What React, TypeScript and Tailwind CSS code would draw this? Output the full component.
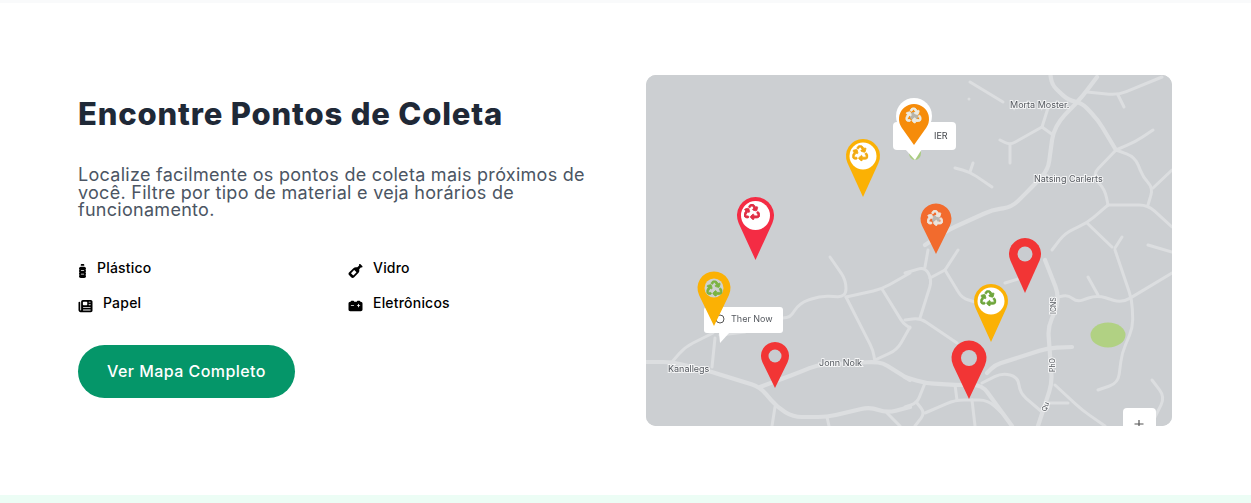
import { FaBottleWater, FaWineBottle, FaNewspaper, FaCarBattery, FaRecycle } from "react-icons/fa6"

const FONT = "font-['Inter','Noto_Sans',sans-serif]"

const MATERIALS = [
  { label: "Plástico", icon: <FaBottleWater className="w-[9px] h-[14px] mt-[6px]" /> },
  { label: "Vidro", icon: <FaWineBottle className="w-[15px] h-[14px] mt-[6px]" /> },
  { label: "Papel", icon: <FaNewspaper className="w-[15px] h-[14px] mt-[6px]" /> },
  { label: "Eletrônicos", icon: <FaCarBattery className="w-[15px] h-[14px] mt-[6px]" /> },
]

// main streets, a bit wider than the side streets
const MAIN_ROADS = [
  "1050,72 1052,85 1068,100 1082,103 1098,120 1116,150",
  "1097,77 1082,97 1060,120 1053,133 1048,170 1032,187 1012,207 992,210 948,230 925,245",
  "646,362 672,362 712,372 760,387 777,407 793,417 827,417 870,407 887,413 910,407",
  "760,387 800,372 817,365 873,362 883,363 910,380",
  "987,373 995,365 1048,348 1072,347",
  "905,377 925,383 955,385 982,385 1012,426",
  "1045,260 1058,293 1057,307 1048,327 1052,383 1038,426",
]

const SIDE_ROADS = [
  "970,82 1003,102",
  "1087,92 1118,95 1162,77",
  "1118,95 1124,107",
  "1116,150 1135,142 1153,130",
  "1116,150 1135,157 1143,177 1153,188 1148,205",
  "1116,150 1092,175 1105,190 1108,205",
  "1108,205 1148,205 1172,227",
  "1153,188 1172,170",
  "1108,205 1087,223 1065,233 1052,250",
  "1087,223 1112,247",
  "1115,248 1122,237",
  "1148,245 1172,252",
  "1042,127 1010,145 1000,140",
  "1010,145 1010,163",
  "1042,127 1053,135",
  "1042,127 1048,108",
  "955,168 970,172 992,187",
  "970,172 973,163",
  "1058,297 1068,295 1077,302 1097,295 1122,303 1172,273",
  "1088,277 1098,295",
  "1115,250 1132,300 1133,327 1122,353 1118,383 1098,390",
  "1152,380 1165,397 1155,417",
  "982,383 1002,373 1018,377 1020,393 1042,412",
  "925,383 917,403 905,407",
  "917,403 925,413 915,426",
  "955,385 957,400",
  "925,413 955,400 988,400 1005,416",
  "972,400 975,426",
  "1055,385 1082,410 1105,426",
  "1048,403 1068,403",
  "905,320 920,318 957,343",
  "920,318 932,280 925,267 905,273",
  "925,267 928,250",
  "945,270 930,278",
  "945,270 958,250",
  "945,270 962,298 975,302",
  "1005,283 1025,277",
  "672,362 685,347 713,333",
  "715,338 712,367",
  "775,407 772,426",
  "827,417 829,426",
  "887,413 900,426",
  "830,257 846,280 846,297 820,296 800,303 790,317 783,318",
  "846,297 882,289 910,273",
  "882,289 903,323 910,328",
  "846,297 873,350 875,362",
  "875,360 897,350 910,327",
  "720,335 745,332",
]

// polyline with its corners rounded off, the streets in the picture have no hard bends
function roadPath(points: string) {
  const pts = points.split(" ").map(p => p.split(",").map(Number))
  let d = `M${pts[0][0]} ${pts[0][1]}`
  for (let i = 1; i < pts.length - 1; i++) {
    const [px, py] = pts[i - 1]
    const [x, y] = pts[i]
    const [nx, ny] = pts[i + 1]
    const inLen = Math.hypot(x - px, y - py)
    const outLen = Math.hypot(nx - x, ny - y)
    const cut = Math.min(9, inLen / 2, outLen / 2)
    d += ` L${x - ((x - px) / inLen) * cut} ${y - ((y - py) / inLen) * cut}`
    d += ` Q${x} ${y} ${x + ((nx - x) / outLen) * cut} ${y + ((ny - y) / outLen) * cut}`
  }
  const last = pts[pts.length - 1]
  return `${d} L${last[0]} ${last[1]}`
}

function pinPath(cx: number, cy: number, r: number, tip: number) {
  const sin = r / (tip - cy)
  const cos = Math.sqrt(1 - sin * sin)
  const lx = cx - r * cos
  const rx = cx + r * cos
  const y = cy + r * sin
  return `M${cx} ${tip} L${lx} ${y} A${r} ${r} 0 1 1 ${rx} ${y} Z`
}

function Pin({ cx, cy, r, tip, color, hole }: { cx: number; cy: number; r: number; tip: number; color: string; hole: number }) {
  return (
    <g>
      <path d={pinPath(cx, cy, r, tip)} fill={color} />
      <circle cx={cx} cy={cy} r={hole} fill="#c9ccd0" />
    </g>
  )
}

function Recycle({ cx, cy, size, color }: { cx: number; cy: number; size: number; color: string }) {
  return <FaRecycle x={cx - size / 2} y={cy - size / 2} width={size} height={size} color={color} stroke={color} strokeWidth={28} />
}

function RecyclePin({ cx, cy, r, tip, color, symbol, hole, disc = "#ffffff" }: { cx: number; cy: number; r: number; tip: number; color: string; symbol: string; hole: number; disc?: string }) {
  return (
    <g>
      <path d={pinPath(cx, cy, r, tip)} fill={color} />
      <circle cx={cx} cy={cy} r={hole} fill={disc} />
      <Recycle cx={cx} cy={cy} size={hole * 1.6} color={symbol} />
    </g>
  )
}

function MapLabel({ x, y, children, rotate }: { x: number; y: number; children: string; rotate?: number }) {
  return (
    <text
      x={x}
      y={y}
      fontSize={rotate ? 7 : 9}
      fill="#55595f"
      stroke="#ffffff"
      strokeWidth={2}
      paintOrder="stroke"
      strokeOpacity={0.75}
      transform={rotate ? `rotate(${rotate} ${x} ${y})` : undefined}
    >
      {children}
    </text>
  )
}

function CollectionMap() {
  return (
    <div className="w-[526px] h-[351px] rounded-[10px] overflow-hidden bg-[#cccfd2]">
      <svg viewBox="646 75 526 351" className={`block w-[526px] h-[351px] blur-[0.4px] ${FONT}`}>
        <rect x="646" y="75" width="526" height="351" fill="#cccfd2" />
        <g fill="none" stroke="#dcdee0" strokeLinejoin="round" strokeLinecap="round">
          {MAIN_ROADS.map(d => <path key={d} d={roadPath(d)} strokeWidth={4.2} />)}
          {SIDE_ROADS.map(d => <path key={d} d={roadPath(d)} strokeWidth={3} />)}
        </g>
        <circle cx="969" cy="99" r="1.5" fill="#dcdee0" />
        <ellipse cx="1108" cy="335" rx="17.5" ry="12.5" fill="#b1d183" />

        <MapLabel x={1010} y={108}>Morta Moster.</MapLabel>
        <MapLabel x={1034} y={182}>Natsing Carlerts</MapLabel>
        <MapLabel x={668} y={372}>Kanallegs</MapLabel>
        <MapLabel x={819} y={366}>Jonn Nolk</MapLabel>
        <MapLabel x={1056} y={314} rotate={-90}>ICNS</MapLabel>
        <MapLabel x={1055} y={372} rotate={-90}>PhO</MapLabel>
        <MapLabel x={1046} y={412} rotate={-70}>Qu</MapLabel>

        {/* "Ther Now" callout */}
        <rect x="704" y="307" width="79" height="26" rx="3" fill="#ffffff" />
        <path d="M719 332 L720 343 L730 332 Z" fill="#ffffff" />
        <circle cx="720" cy="319" r="4" fill="none" stroke="#555555" strokeWidth="1" />
        <text x="731" y="322" fontSize="9" fill="#55595f">Ther Now</text>

        {/* top callout */}
        <ellipse cx="915" cy="153" rx="6" ry="7" fill="#a9cc80" />
        <path d="M905 149 L915 160 L922 149 Z" fill="#ffffff" />
        <rect x="893" y="122" width="63" height="28" rx="4" fill="#ffffff" />
        <text x="934" y="138.5" fontSize="9" fill="#44474c">IER</text>
        <circle cx="914" cy="116" r="18" fill="#ffffff" />

        <path d={pinPath(914, 119, 15, 145)} fill="#f68c0a" />
        <circle cx="914" cy="116" r="4" fill="#b8b4a8" />
        <Recycle cx={914} cy={116} size={17} color="#ecebe2" />
        <RecyclePin cx={863} cy={156} r={17} tip={197} color="#fbb104" symbol="#f2ab12" hole={13.5} />
        <RecyclePin cx={755.5} cy={215.5} r={18.5} tip={260} color="#f42c44" symbol="#e02f45" hole={14.5} />
        <path d={pinPath(936, 219, 15.5, 254)} fill="#f26b2d" />
        <circle cx="936" cy="219" r="4" fill="#b9b6b2" />
        <Recycle cx={936} cy={219} size={18} color="#ece4dc" />
        <Pin cx={1025} cy={254} r={16} tip={293} color="#f23535" hole={7.5} />
        <RecyclePin cx={991} cy={301} r={17} tip={342} color="#fbb104" symbol="#6fa63c" hole={13.5} />
        <Pin cx={969} cy={358} r={17.5} tip={399} color="#f23535" hole={8} />
        <Pin cx={775} cy={356} r={14} tip={388} color="#f23535" hole={6.5} />
        <RecyclePin cx={714} cy={288} r={16.5} tip={326} color="#fbb104" symbol="#7cb342" hole={9.5} disc="#cfd2d0" />

        {/* zoom control, cut off by the map's edge */}
        <rect x="1123" y="408" width="33" height="40" rx="4" fill="#ffffff" />
        <path d="M1139 420 V428 M1134.5 424 H1143.5" stroke="#555555" strokeWidth="1.2" fill="none" />
      </svg>
    </div>
  )
}

export default function App() {
  return (
    <div className={`min-h-screen bg-white ${FONT}`}>
      <div className="h-[3px] bg-[#f9fafb]" />
      <section className="flex gap-12 pl-[78px] pt-[72px] pb-[69px]">
        <div className="w-[520px] pt-[21px]">
          <h2 className="text-[31px] leading-9 font-extrabold text-[#1f2937] tracking-[0.83px] whitespace-nowrap">Encontre Pontos de Coleta</h2>
          <p className="mt-[34px] text-[18px] leading-[17.5px] text-[#4b5563] tracking-[0.28px]">
            Localize facilmente os pontos de coleta mais próximos de você. Filtre por tipo de material e veja horários de funcionamento.
          </p>
          <div className="mt-[39px] grid grid-cols-2 gap-x-5 gap-y-[15px]">
            {MATERIALS.map(m => (
              <div key={m.label} className="flex items-start gap-[10px] h-5 text-black">
                {m.icon}
                <span className="text-sm leading-5 font-medium tracking-[0.2px]">{m.label}</span>
              </div>
            ))}
          </div>
          <button className="mt-8 w-[217px] h-[53px] rounded-full bg-[#059669] text-white text-base font-medium tracking-[0.45px]">
            Ver Mapa Completo
          </button>
        </div>
        <CollectionMap />
      </section>
      <div className="h-2 bg-[#ecfdf5]" />
    </div>
  )
}
